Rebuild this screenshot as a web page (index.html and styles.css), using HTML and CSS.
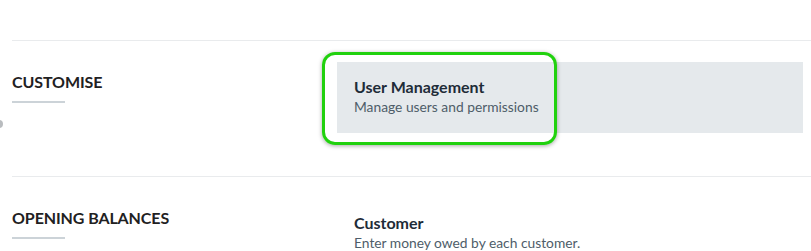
FILE: index.html
```html
<!DOCTYPE html>
<html lang="en">
<head>
  <meta charset="UTF-8">
  <meta name="viewport" content="width=device-width, initial-scale=1.0">
  <title>Settings</title>
  <link rel="stylesheet" href="styles.css">
</head>
<body>
  <div class="edge-dot"></div>
  <main class="settings">
    <section class="settings-row">
      <div class="row-heading">
        <h2>CUSTOMISE</h2>
      </div>
      <div class="row-items">
        <a class="setting-card active" href="#">
          <span class="card-title">User Management</span>
          <span class="card-desc">Manage users and permissions</span>
          <span class="highlight"></span>
        </a>
      </div>
    </section>

    <section class="settings-row">
      <div class="row-heading">
        <h2>OPENING BALANCES</h2>
      </div>
      <div class="row-items">
        <a class="setting-card" href="#">
          <span class="card-title">Customer</span>
          <span class="card-desc">Enter money owed by each customer.</span>
        </a>
      </div>
    </section>
  </main>
</body>
</html>
```

FILE: styles.css
```css
:root {
  --heading: #1f2122;
  --title: #1e2c38;
  --desc: #4e5d69;
  --card-bg: #e5e9ec;
  --rule: #e9ebed;
  --underline: #ccd3d8;
  --green: #21d10e;
}

* {
  box-sizing: border-box;
  margin: 0;
  padding: 0;
}

body {
  font-family: Lato, 'Open Sans', sans-serif;
  background: #ffffff;
  color: var(--heading);
  overflow: hidden;
  position: relative;
}

.settings {
  padding: 40px 0 0 12px;
}

.settings-row {
  display: flex;
  border-top: 1px solid var(--rule);
  padding: 21px 0 43px;
}

.row-heading {
  width: 325px;
  flex-shrink: 0;
  padding-top: 10px;
}

.row-heading h2 {
  font-size: 16px;
  font-weight: 700;
  line-height: 20px;
  letter-spacing: -0.1px;
}

.row-heading h2::after {
  content: "";
  display: block;
  width: 53px;
  height: 2px;
  margin-top: 9px;
  background: var(--underline);
}

.row-items {
  flex: 1;
  padding-right: 8px;
}

.setting-card {
  position: relative;
  display: flex;
  flex-direction: column;
  padding: 15px 17px 16px;
  text-decoration: none;
}

.setting-card.active {
  background: var(--card-bg);
}

.card-title {
  font-size: 16px;
  font-weight: 700;
  line-height: 20px;
  color: var(--title);
}

.card-desc {
  font-size: 13.8px;
  line-height: 20px;
  color: var(--desc);
}

.highlight {
  position: absolute;
  left: -15px;
  top: -10px;
  width: 235px;
  height: 93px;
  border: 3.5px solid var(--green);
  border-radius: 13px;
  box-shadow: 0 1px 4px rgba(0, 0, 0, 0.35);
  pointer-events: none;
}

.edge-dot {
  position: absolute;
  left: -5px;
  top: 120px;
  width: 8px;
  height: 8px;
  border-radius: 50%;
  background: #b9bcbf;
}
```
